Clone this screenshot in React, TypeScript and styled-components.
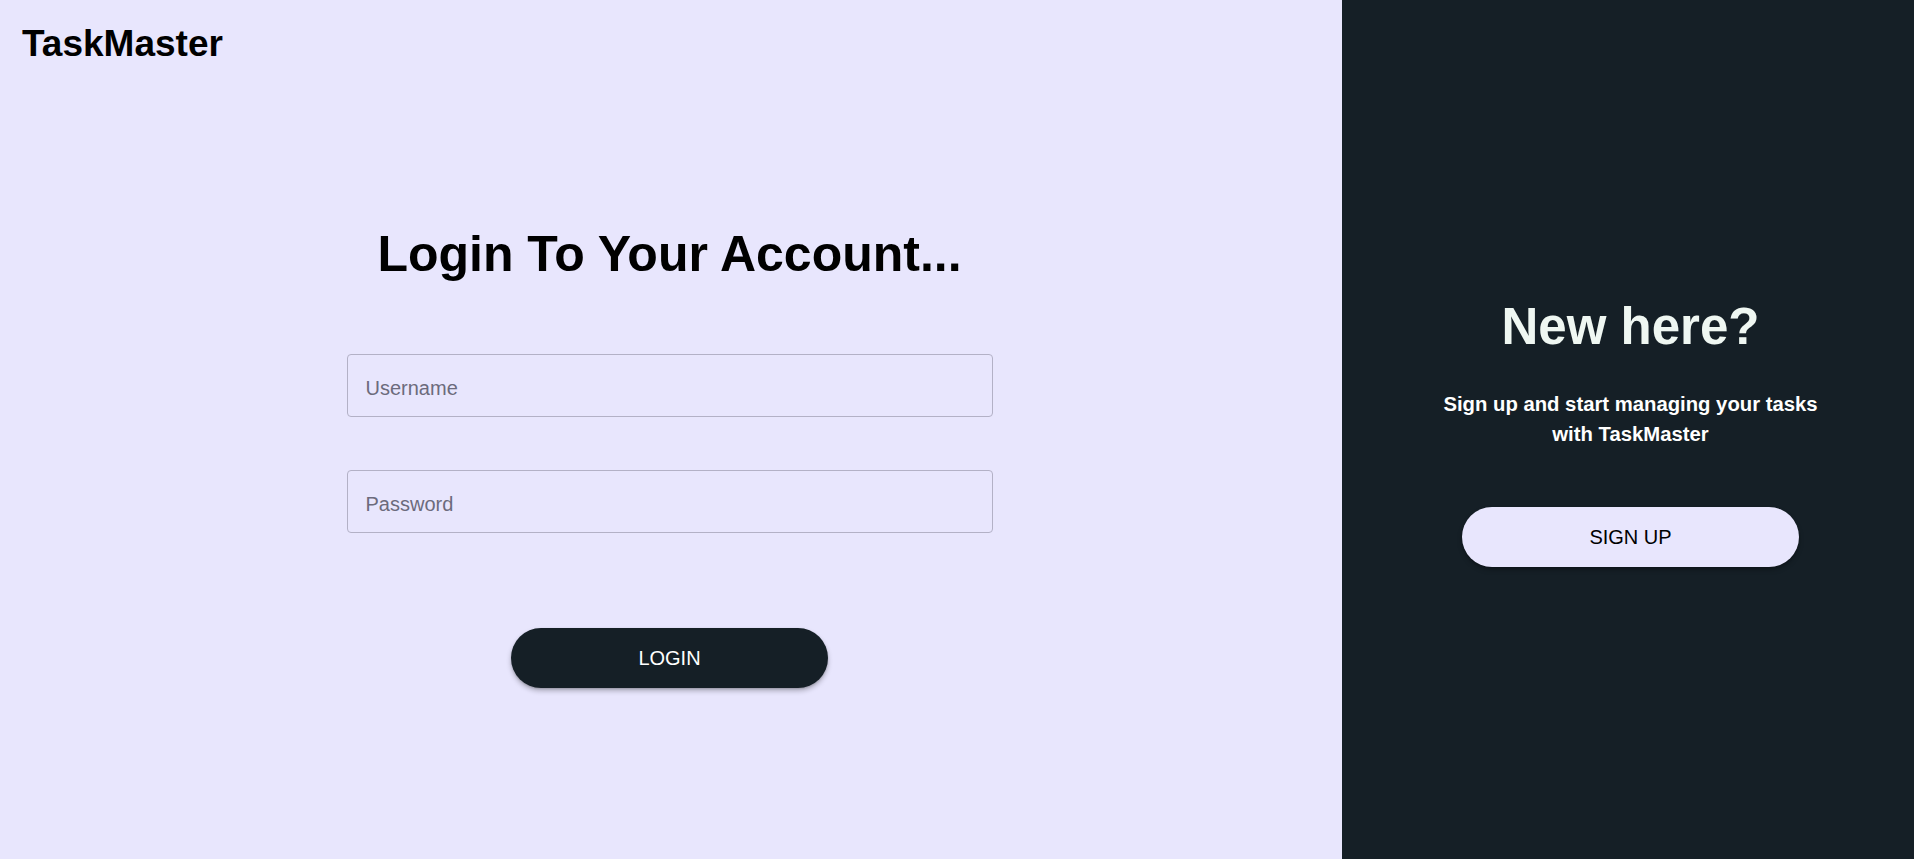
import React from "react";
import styled, { createGlobalStyle } from "styled-components";

const GlobalStyle = createGlobalStyle`
  * { box-sizing: border-box; }
  html, body { margin: 0; padding: 0; }
  body {
    font-family: "Liberation Sans", Arial, sans-serif;
    background: #e8e6fd;
  }
`;

const Page = styled.div`
  display: flex;
  width: 100%;
  height: 859px;
  overflow: hidden;
`;

const LeftPanel = styled.section`
  flex: 0 0 1342px;
  display: flex;
  flex-direction: column;
  background: #e8e6fd;
  padding: 23px 0 0 22px;
`;

const Logo = styled.h1`
  margin: 0;
  font-size: 37px;
  line-height: 42px;
  font-weight: 700;
  color: #000;
`;

const FormArea = styled.div`
  flex: 1;
  display: flex;
  flex-direction: column;
  align-items: center;
  padding-top: 161px;
  padding-right: 25px;
`;

const Title = styled.h2<{ $light?: boolean; $size: number }>`
  margin: 0;
  font-size: ${(p) => p.$size}px;
  line-height: 56px;
  font-weight: 700;
  text-align: center;
  color: ${(p) => (p.$light ? "#eff7f2" : "#000")};
`;

const Fields = styled.div`
  width: 646px;
  display: flex;
  flex-direction: column;
  gap: 53px;
  margin-top: 72px;
`;

const Input = styled.input`
  width: 100%;
  height: 63px;
  padding: 6px 18px 0;
  border: 1px solid #b3b1c6;
  border-radius: 4px;
  background: transparent;
  font-family: "Liberation Sans", Arial, sans-serif;
  font-size: 20px;
  color: #222;
  outline: none;
  &::placeholder {
    color: #6c6b7c;
  }
`;

const PillButton = styled.button<{ $variant: "dark" | "light" }>`
  height: 60px;
  padding: 0 127px;
  border: none;
  border-radius: 30px;
  font-family: "Liberation Sans", Arial, sans-serif;
  font-size: 20px;
  font-weight: 400;
  cursor: pointer;
  background: ${(p) => (p.$variant === "dark" ? "#151f26" : "#e8e6fd")};
  color: ${(p) => (p.$variant === "dark" ? "#ffffff" : "#000000")};
  box-shadow: 0 3px 5px rgba(0, 0, 0, 0.25), 0 1px 2px rgba(0, 0, 0, 0.15);
`;

const LoginButton = styled(PillButton)`
  margin-top: 95px;
`;

const RightPanel = styled.section`
  flex: 1;
  background: #151f26;
  display: flex;
  flex-direction: column;
  align-items: center;
  justify-content: center;
  padding: 7px 0 0 5px;
`;

const Subtitle = styled.p`
  margin: 34px 0 0;
  max-width: 400px;
  font-size: 20.3px;
  line-height: 30px;
  font-weight: 700;
  text-align: center;
  color: #ffffff;
`;

const SignUpButton = styled(PillButton)`
  margin-top: 58px;
`;

export default function App() {
  return (
    <>
      <GlobalStyle />
      <Page>
        <LeftPanel>
          <Logo>TaskMaster</Logo>
          <FormArea>
            <Title $size={50}>Login To Your Account...</Title>
            <Fields>
              <Input type="text" placeholder="Username" />
              <Input type="password" placeholder="Password" />
            </Fields>
            <LoginButton $variant="dark">LOGIN</LoginButton>
          </FormArea>
        </LeftPanel>
        <RightPanel>
          <Title $light $size={51}>New here?</Title>
          <Subtitle>Sign up and start managing your tasks with TaskMaster</Subtitle>
          <SignUpButton $variant="light">SIGN UP</SignUpButton>
        </RightPanel>
      </Page>
    </>
  );
}
